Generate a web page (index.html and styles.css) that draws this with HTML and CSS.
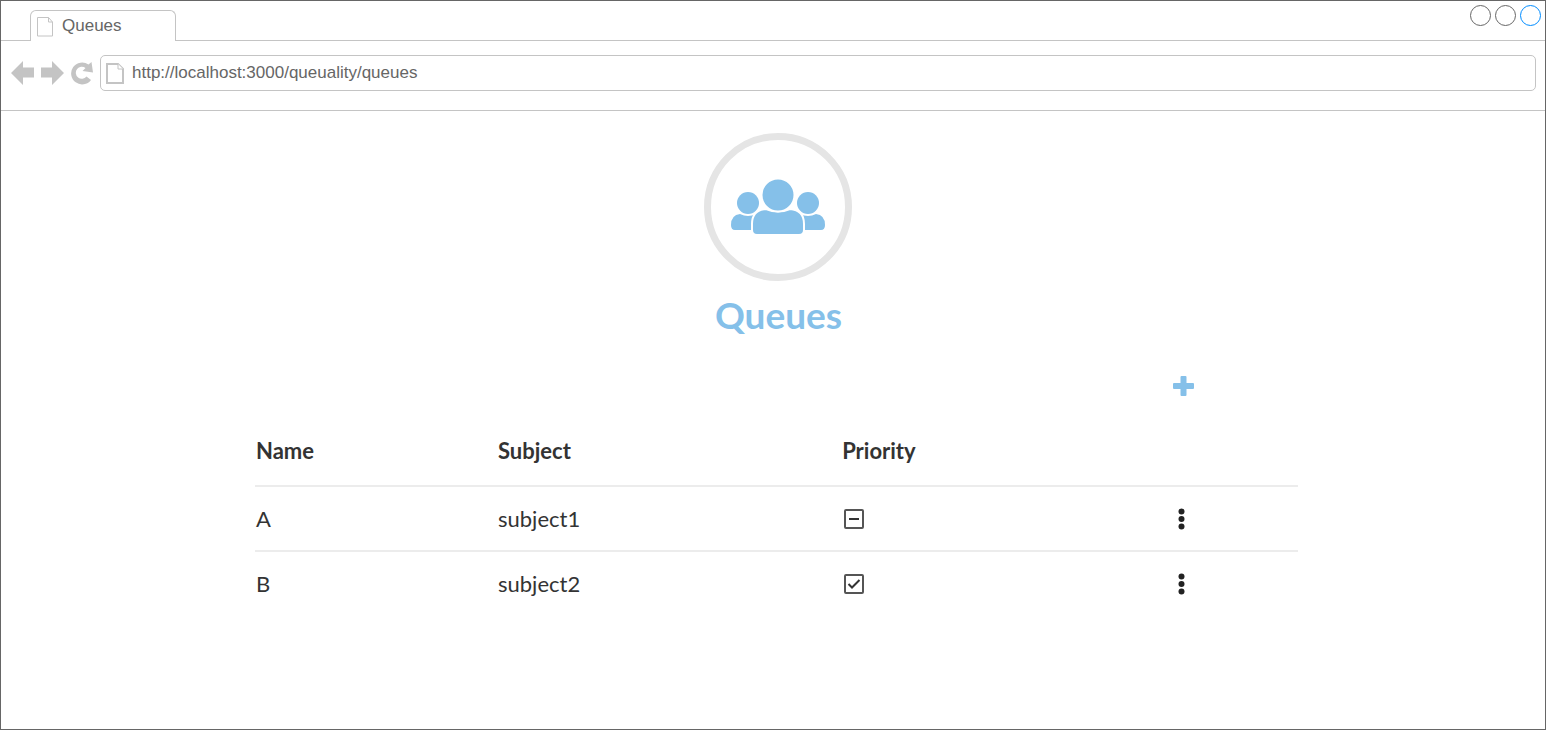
FILE: index.html
```html
<!DOCTYPE html>
<html lang="en">
<head>
<meta charset="utf-8">
<title>Queues</title>
<link rel="stylesheet" href="styles.css">
</head>
<body>
<div class="browser">
  <header class="tabs">
    <div class="tab">
      <svg class="tab-icon" width="17" height="20" viewBox="0 0 17 20" aria-hidden="true"><path d="M.5 .5h11l4 4.500v14H.5zM11.500 .5v4.500h4"/></svg>
      <span>Queues</span>
    </div>
    <div class="window-buttons">
      <button class="window-button" type="button" aria-label="Minimize"></button>
      <button class="window-button" type="button" aria-label="Maximize"></button>
      <button class="window-button window-close" type="button" aria-label="Close"></button>
    </div>
  </header>
  <nav class="toolbar">
    <button class="nav-button" type="button" aria-label="Back"><svg width="23" height="26" viewBox="0 0 23 26"><path d="M0 13 12 1v6.500h11v10H12V25z"/></svg></button>
    <button class="nav-button" type="button" aria-label="Forward"><svg width="23" height="26" viewBox="0 0 23 26"><path d="M23 13 11 1v6.500H0v10h11V25z"/></svg></button>
    <button class="nav-button" type="button" aria-label="Reload"><svg width="22" height="26" viewBox="0 0 22 26"><path d="M17.500 4.500 20.500 2l1.500 10.500-10.500-1.500 3-3A6 6 0 1 0 15.500 16.500l4.500 3.500A11 11 0 1 1 17.500 4.500z"/></svg></button>
    <label class="address">
      <svg class="page-icon" width="18" height="21" viewBox="0 0 18 21" aria-hidden="true"><path d="M1 1h11l5 5v14H1z"/><path class="fold" d="M12 1v5h5"/></svg>
      <input class="url" type="text" aria-label="Address" value="http://localhost:3000/queuality/queues">
    </label>
  </nav>
  <main class="content">
    <div class="hero">
      <div class="badge">
        <svg width="94" height="58" viewBox="0 0 94 58" aria-hidden="true">
          <circle cx="17" cy="25" r="11"/><circle cx="77" cy="25" r="11"/>
          <path d="M0 47q0-10 9-11 8 4 16 0l5 3v13H4q-4 0-4-5zM94 47q0-10-9-11-8 4-16 0l-5 3v13h26q4 0 4-5z"/>
          <path class="front" d="M21 50V46q0-14 14-15 12 5 24 0 14 1 14 15v6q0 5-5 5H26q-5 0-5-5z"/>
          <circle class="front" cx="47" cy="17" r="16.500"/>
        </svg>
      </div>
      <h1 class="title">Queues</h1>
    </div>
    <div class="actions"><button class="icon-button add" type="button" aria-label="Add queue"><svg width="21" height="20" viewBox="0 0 21 20"><path d="M7.500 1q0-1 1-1h4q1 0 1 1v6H20q1 0 1 1v4q0 1-1 1h-6.500v6q0 1-1 1h-4q-1 0-1-1v-6H1q-1 0-1-1V8q0-1 1-1h6.500z"/></svg></button></div>
    <table class="queues">
      <thead><tr><th class="col-name">Name</th><th class="col-subject">Subject</th><th class="col-priority">Priority</th><th></th></tr></thead>
      <tbody>
        <tr><td>A</td><td>subject1</td>
          <td><label class="check"><input type="checkbox" aria-label="Priority of A"><svg width="20" height="20" viewBox="0 0 20 20"><path d="M5 10h10"/></svg></label></td>
          <td><button class="icon-button" type="button" aria-label="Options for A"><svg width="7" height="22" viewBox="0 0 7 22"><circle cx="3.500" cy="3.500" r="3"/><circle cx="3.500" cy="11" r="3"/><circle cx="3.500" cy="18.500" r="3"/></svg></button></td></tr>
        <tr><td>B</td><td>subject2</td>
          <td><label class="check"><input type="checkbox" aria-label="Priority of B" checked><svg width="20" height="20" viewBox="0 0 20 20"><path d="m4.500 10 3.500 3.500L15.500 6"/></svg></label></td>
          <td><button class="icon-button" type="button" aria-label="Options for B"><svg width="7" height="22" viewBox="0 0 7 22"><circle cx="3.500" cy="3.500" r="3"/><circle cx="3.500" cy="11" r="3"/><circle cx="3.500" cy="18.500" r="3"/></svg></button></td></tr>
      </tbody>
    </table>
  </main>
</div>
</body>
</html>
```
FILE: styles.css
```css
* { box-sizing: border-box; }
body { margin: 0; background: #fff; }
svg { display: block; }
button { padding: 0; border: 0; background: none; cursor: pointer; }

.browser {
  min-height: 100vh;
  border: 1px solid #666;
  font-family: "Liberation Sans", Arial, sans-serif;
  font-size: 17px;
  color: #666;
}

.tabs {
  display: flex;
  justify-content: space-between;
  height: 40px;
  padding: 0 4px 0 29px;
  border-bottom: 1px solid #c4c4c4;
}
.tab {
  display: flex;
  gap: 8px;
  width: 146px;
  height: 31px;
  margin-top: 9px;
  padding: 6px 6px 0;
  border: 1px solid #c4c4c4;
  border-bottom: 0;
  border-radius: 6px 6px 0 0;
  background: #fff;
  line-height: 18px;
}
.tab-icon { fill: #fff; stroke: #c4c4c4; }
.window-buttons { display: flex; gap: 4px; padding-top: 4px; }
.window-button { width: 21px; height: 21px; border: 1px solid #666; border-radius: 50%; }
.window-close { border-color: #008cff; }

.toolbar {
  display: flex;
  align-items: center;
  height: 70px;
  padding: 0 9px 5px 10px;
  gap: 7px;
  border-bottom: 1px solid #c4c4c4;
}
.nav-button { fill: #c4c4c4; }
.address {
  display: flex;
  flex: 1;
  align-items: center;
  gap: 8px;
  height: 36px;
  padding: 0 5px;
  border: 1px solid #c4c4c4;
  border-radius: 5px;
}
.page-icon { fill: #fff; stroke: #c4c4c4; stroke-width: 2; }
.fold { stroke-width: 1; }
.url {
  flex: 1;
  min-width: 0;
  padding: 0;
  border: 0;
  outline: 0;
  background: none;
  font: inherit;
  color: inherit;
}

.content {
  padding: 22px 16% 32px 254px;
  font-family: Lato, sans-serif;
  font-size: 22px;
  color: #333;
}
.hero { padding-left: 4px; }
.badge {
  display: grid;
  place-items: center;
  width: 148px;
  height: 148px;
  margin: 0 auto;
  border: 7px solid #e5e5e5;
  border-radius: 50%;
  fill: #85c0e9;
}
.front { stroke: #fff; stroke-width: 2; }
.title {
  margin: 10px 0 0;
  font-size: 37px;
  line-height: 48px;
  text-align: center;
  color: #85c0e9;
}
.actions { display: flex; justify-content: flex-end; padding: 37px 104px 0 0; }
.icon-button { display: block; fill: #222; }
.add { fill: #85c0e9; }

.queues { width: 100%; margin-top: 20px; border-collapse: collapse; table-layout: fixed; }
.queues th,
.queues td { height: 65px; padding: 0 1px; border-bottom: 2px solid #ececec; }
.queues th { height: 70px; text-align: left; }
.queues tbody tr:last-child td { border-bottom-color: transparent; }
.col-name { width: 242px; }
.col-subject { width: 33%; }
.col-priority { width: 32%; }
.queues td:last-child { padding-left: 3px; }

.check { display: grid; width: 20px; height: 20px; margin-left: 2px; }
.check > * { grid-area: 1 / 1; }
.check input { appearance: none; width: 20px; height: 20px; margin: 0; border: 2px solid #555; border-radius: 2px; }
.check svg { fill: none; stroke: #333; stroke-width: 2; pointer-events: none; }
```
